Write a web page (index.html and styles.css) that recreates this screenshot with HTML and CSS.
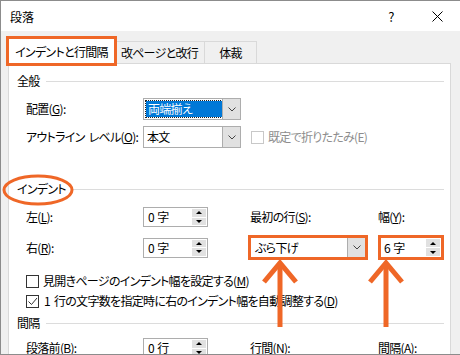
FILE: index.html
```html
<!DOCTYPE html>
<html lang="ja">
<head>
    <meta charset="UTF-8">
    <title>段落</title>
    <link rel="stylesheet" href="styles.css">
</head>
<body>
    <div class="dialog">
        <div class="titlebar">
            <span class="title">段落</span>
            <span class="help">?</span>
            <span class="close">
                <svg width="11" height="11" viewBox="0 0 11 11"><path d="M0.5 0.5 L10.5 10.5 M10.5 0.5 L0.5 10.5" stroke="#000" stroke-width="1" fill="none"/></svg>
            </span>
        </div>

        <div class="tabs">
            <div class="tab active hl">インデントと行間隔</div>
            <div class="tab tab-2">改ページと改行</div>
            <div class="tab tab-3">体裁</div>
        </div>

        <div class="panel">
            <!-- 全般 -->
            <div class="group-head"><span>全般</span><div class="rule"></div></div>
            <div class="row row-first">
                <span>配置(<u>G</u>):</span>
                <div class="select w-98">
                    <div class="val"><span class="selected">両端揃え</span></div>
                    <div class="drop"><svg width="8" height="5" viewBox="0 0 8 5"><path d="M0.5 0.5 L4 4 L7.5 0.5" stroke="#444" fill="none"/></svg></div>
                </div>
            </div>
            <div class="row row-outline">
                <span>アウトライン レベル(<u>O</u>):</span>
                <div class="select w-98">
                    <div class="val">本文</div>
                    <div class="drop"><svg width="8" height="5" viewBox="0 0 8 5"><path d="M0.5 0.5 L4 4 L7.5 0.5" stroke="#444" fill="none"/></svg></div>
                </div>
                <label class="check disabled"><span class="box"></span><span>既定で折りたたみ(E)</span></label>
            </div>

            <!-- インデント -->
            <div class="group-head group-indent"><span>インデント</span><div class="rule"></div></div>
            <div class="row row-left">
                <span>左(<u>L</u>):</span>
                <div class="spin">
                    <div class="val">0 字</div>
                    <div class="btns"><span class="up"></span><span class="down"></span></div>
                </div>
                <span>最初の行(<u>S</u>):</span>
                <span>幅(<u>Y</u>):</span>
            </div>
            <div class="row row-right">
                <span>右(<u>R</u>):</span>
                <div class="spin">
                    <div class="val">0 字</div>
                    <div class="btns"><span class="up"></span><span class="down"></span></div>
                </div>
                <div class="select w-116 hl">
                    <div class="val">ぶら下げ</div>
                    <div class="drop"><svg width="8" height="5" viewBox="0 0 8 5"><path d="M0.5 0.5 L4 4 L7.5 0.5" stroke="#444" fill="none"/></svg></div>
                </div>
                <div class="spin spin-width hl">
                    <div class="val">6 字</div>
                    <div class="btns"><span class="up"></span><span class="down"></span></div>
                </div>
            </div>
            <label class="check check-mirror"><span class="box"></span><span>見開きページのインデント幅を設定する(<u>M</u>)</span></label>
            <label class="check check-auto">
                <span class="box"><svg width="11" height="11" viewBox="0 0 11 11"><path d="M1.5 5.5 L4.5 8.5 L10 2" stroke="#333" fill="none"/></svg></span>
                <span>1 行の文字数を指定時に右のインデント幅を自動調整する(<u>D</u>)</span>
            </label>

            <!-- 間隔 -->
            <div class="group-head group-space"><span>間隔</span><div class="rule"></div></div>
            <div class="row row-before">
                <span>段落前(<u>B</u>):</span>
                <div class="spin">
                    <div class="val">0 行</div>
                    <div class="btns"><span class="up"></span><span class="down"></span></div>
                </div>
                <span>行間(<u>N</u>):</span>
                <span>間隔(<u>A</u>):</span>
            </div>
        </div>

        <!-- annotation marks drawn over the dialog -->
        <svg class="marks" width="460" height="355" viewBox="0 0 460 355">
            <ellipse cx="38" cy="190" rx="34" ry="14" fill="none" stroke="#ef6727" stroke-width="3"/>
            <g stroke="#ef6727" stroke-width="5" fill="none" stroke-miterlimit="10">
                <path d="M280 264 V327"/>
                <path d="M264 282 L280 263 L296 282"/>
                <path d="M386 264 V327"/>
                <path d="M370 282 L386 263 L402 282"/>
            </g>
        </svg>
    </div>
</body>
</html>
```

FILE: styles.css
```css
body {
    margin: 0;
    background: #fff;
    font-family: "Noto Sans CJK JP", "Noto Sans", sans-serif;
    font-size: 12px;
    letter-spacing: -0.7px;
    word-spacing: 2px;
    color: #000;
    font-feature-settings: "palt";
}
.dialog {
    position: relative;
    width: 459px;
    height: 353px;
    border: 1px solid #8c8c8c;
    border-right: none;
    background: #f0f0f0;
    overflow: hidden;
}
.titlebar {
    display: flex;
    align-items: center;
    height: 30px;
    background: #fff;
}
.title {
    padding-left: 9px;
    font-size: 12px;
    letter-spacing: 0;
}
.help {
    margin-left: auto;
    width: 46px;
    text-align: center;
    font-size: 13px;
}
.close {
    width: 46px;
    display: flex;
    justify-content: center;
}
.close svg {
    display: block;
}
.tabs {
    display: flex;
    align-items: flex-end;
    height: 25px;
    margin-top: 7px;
    padding-left: 7px;
}
.tab {
    box-sizing: border-box;
    height: 22px;
    border: 1px solid #d9d9d9;
    border-bottom: none;
    display: flex;
    align-items: center;
    justify-content: center;
    line-height: 16px;
    white-space: nowrap;
}
.tab.active {
    position: relative;
    z-index: 1;
    width: 107px;
    height: 26px;
    margin-bottom: -1px;
    background: #fff;
}
.tab-2 {
    width: 90px;
    border-left: none;
}
.tab-3 {
    width: 52px;
    border-left: none;
}
.hl {
    outline: 3px solid #ef6727;
    outline-offset: -1px;
}
.panel {
    box-sizing: border-box;
    width: 443px;
    height: 300px;
    margin-left: 7px;
    background: #fff;
    border: 1px solid #d9d9d9;
    padding: 9px 6px 0 8px;
}
.group-head {
    display: flex;
    align-items: center;
    gap: 6px;
    height: 16px;
    line-height: 16px;
}
.group-head .rule {
    flex: 1;
    height: 1px;
    background: #dcdcdc;
}
.row {
    display: grid;
    grid-template-columns: 117px 107px 128px 1fr;
    align-items: center;
    margin-left: 9px;
    line-height: 16px;
    white-space: nowrap;
}
.row-first { margin-top: 9px; }
.row-outline { margin-top: 6px; }
.group-indent { margin-top: 33px; }
.row-left { margin-top: 10px; }
.row-right { margin-top: 10px; }
.check-mirror { margin-top: 15px; }
.check-auto { margin-top: 4px; }
.group-space { margin-top: 6px; }
.row-before { margin-top: 7px; }

.select {
    box-sizing: border-box;
    display: flex;
    height: 22px;
    border: 1px solid #adadad;
    background: #fff;
}
.w-98 { width: 98px; }
.w-116 { width: 116px; height: 21px; }
.select .val {
    flex: 1;
    display: flex;
    align-items: center;
    padding-left: 3px;
}
.w-116 .val {
    padding-left: 4px;
}
.select .selected {
    display: flex;
    align-items: center;
    width: 74px;
    height: 16px;
    padding-left: 2px;
    margin-left: -1px;
    background: #0078d7;
    color: #fff;
    outline: 1px dotted #222;
}
.select .drop {
    width: 17px;
    background: #e1e1e1;
    border-left: 1px solid #adadad;
    display: flex;
    align-items: center;
    justify-content: center;
}
.select .drop svg {
    display: block;
}

.spin {
    box-sizing: border-box;
    display: flex;
    width: 65px;
    height: 20px;
    border: 1px solid #adadad;
    background: #fff;
}
.spin-width {
    width: 62px;
    height: 21px;
    margin-left: 2px;
}
.spin .val {
    flex: 1;
    padding-left: 4px;
    display: flex;
    align-items: center;
    letter-spacing: 0;
    word-spacing: 0;
}
.spin-width .val {
    padding-left: 3px;
}
.spin .btns {
    width: 14px;
    margin: 1px 1px 1px 0;
    display: flex;
    flex-direction: column;
    gap: 1px;
}
.spin .btns span {
    flex: 1;
    background: #e1e1e1;
    display: flex;
    align-items: center;
    justify-content: center;
}
.spin .up::before {
    content: "";
    border-left: 3px solid transparent;
    border-right: 3px solid transparent;
    border-bottom: 3px solid #000;
}
.spin .down::before {
    content: "";
    border-left: 3px solid transparent;
    border-right: 3px solid transparent;
    border-top: 3px solid #000;
}

.check {
    display: flex;
    align-items: center;
    gap: 4px;
    height: 16px;
    line-height: 16px;
    margin-left: 9px;
    white-space: nowrap;
}
.row .check {
    margin-left: 1px;
}
.check .box {
    box-sizing: border-box;
    flex: none;
    width: 13px;
    height: 13px;
    border: 1px solid #333;
    background: #fff;
    display: flex;
    align-items: center;
    justify-content: center;
}
.check .box svg {
    display: block;
}
.check.disabled {
    color: #8d8d8d;
}
.check.disabled .box {
    border-color: #c8c8c8;
}
.check-auto .box {
    margin-right: 1px;
}

.marks {
    position: absolute;
    top: -1px;
    left: -1px;
    pointer-events: none;
}
```
